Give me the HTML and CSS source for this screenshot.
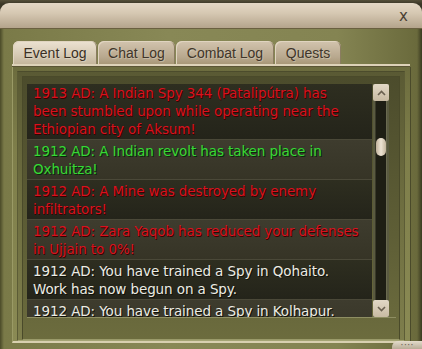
FILE: index.html
```html
<!DOCTYPE html>
<html lang="en">
<head>
    <meta charset="UTF-8">
    <meta name="viewport" content="width=device-width, initial-scale=1.0">
    <title>Event Log</title>
    <link rel="stylesheet" href="styles.css">
</head>
<body>
    <div class="window">
        <div class="titlebar">
            <span class="close">x</span>
        </div>
        <div class="main">
            <div class="tabs">
                <div class="tab active tab-event">Event Log</div>
                <div class="tab tab-chat">Chat Log</div>
                <div class="tab tab-combat">Combat Log</div>
                <div class="tab tab-quests">Quests</div>
            </div>
            <div class="tabline"></div>
            <div class="frame1">
                <div class="frame2">
                    <div class="frame3">
                        <div class="log">
                            <div class="rows">
                                <div class="row dark red">1913 AD: A Indian Spy 344 (Patalipútra) has<br>been stumbled upon while operating near the<br>Ethiopian city of Aksum!</div>
                                <div class="row light green">1912 AD: A Indian revolt has taken place in<br>Oxhuitza!</div>
                                <div class="row dark red">1912 AD: A Mine was destroyed by enemy<br>infiltrators!</div>
                                <div class="row light red">1912 AD: Zara Yaqob has reduced your defenses<br>in Ujjain to 0%!</div>
                                <div class="row dark white">1912 AD: You have trained a Spy in Qohaito.<br>Work has now begun on a Spy.</div>
                                <div class="row light white">1912 AD: You have trained a Spy in Kolhapur.<br>Work has now begun on a Spy.</div>
                            </div>
                            <div class="scrollbar">
                                <div class="sb-btn">
                                    <svg width="9" height="6" viewBox="0 0 9 6"><path d="M1 5 L4.5 1.5 L8 5" fill="none" stroke="#6a6050" stroke-width="1.6"/></svg>
                                </div>
                                <div class="sb-track">
                                    <div class="sb-thumb"></div>
                                </div>
                                <div class="sb-btn">
                                    <svg width="9" height="6" viewBox="0 0 9 6"><path d="M1 1 L4.5 4.5 L8 1" fill="none" stroke="#6a6050" stroke-width="1.6"/></svg>
                                </div>
                            </div>
                        </div>
                    </div>
                </div>
            </div>
        </div>
        <div class="grip">&middot;&middot;&middot;&middot;</div>
    </div>
</body>
</html>
```

FILE: styles.css
```css
body {
    margin: 0;
    background: #2e2c20;
    font-family: "Liberation Sans", Arial, sans-serif;
}
.window {
    position: relative;
    width: 422px;
    height: 349px;
    overflow: hidden;
    background: linear-gradient(#55503a, #3a3626 4px);
}
.titlebar {
    margin-top: 3px;
    height: 25px;
    border-radius: 9px 9px 0 0;
    background: linear-gradient(#e4d8c6, #d6c8b2 40%, #b4a48c);
    border-bottom: 1px solid #6a6040;
    display: flex;
    justify-content: flex-end;
    align-items: center;
}
.close {
    font-family: "DejaVu Sans", sans-serif;
    font-size: 15px;
    color: #4a4034;
    margin-right: 14px;
    margin-top: 1px;
}
.main {
    height: 320px;
    background: linear-gradient(90deg, #4a4a28 0, #7a7a48 4px, #888856 40%, #848452 80%, #6a6a3c 417px, #3a3a20 422px);
    padding-top: 12px;
}
.tabs {
    display: flex;
    gap: 1px;
    padding-left: 13px;
    height: 23px;
}
.tab {
    height: 23px;
    border-radius: 6px 6px 0 0;
    background: linear-gradient(#d2c4ae, #b8a88e 70%, #a89878);
    color: #40362a;
    font-size: 14px;
    line-height: 25px;
    text-align: center;
    box-shadow: inset 1px 1px 0 #e0d4c0, inset -1px 0 0 #8a7c60;
    text-shadow: 1px 1px 0 rgba(255, 255, 255, 0.25);
}
.tab.active {
    background: linear-gradient(#ece2d2, #d6cab4 60%, #c4b69c);
    color: #3a3024;
}
.tab-event { width: 84px; }
.tab-chat { width: 77px; }
.tab-combat { width: 98px; }
.tab-quests { width: 66px; }
.tabline {
    margin: 0 12px;
    height: 2px;
    background: #ddd2b8;
    border-bottom: 1px solid #5a5434;
}
.frame1 {
    margin: 0 11px 0 12px;
    height: 270px;
    padding: 4px 5px 0 4px;
    border-left: 1px solid #9a9a66;
    border-right: 1px solid #4a4a2a;
    border-bottom: 2px solid #d8d0b0;
    background: linear-gradient(#6c6c3e, #7e7e4a 30%, #8a8a54);
}
.frame2 {
    height: 264px;
    padding: 4px 4px 0 4px;
    border: 1px solid #5c5c36;
    border-top-color: #4c4c2c;
    border-bottom-color: #a4a474;
    background: linear-gradient(#5a5a34, #6e6e40 50%, #7e7e4c);
}
.frame3 {
    height: 255px;
    padding: 7px 3px 0 4px;
    border: 1px solid #4a4a2a;
    border-bottom-color: #9a9a6a;
    background: linear-gradient(#4c4c2c, #5e5e36 60%, #6c6c3e);
}
.log {
    display: flex;
    height: 233px;
    overflow: hidden;
    border-bottom: 1px solid #8e8e62;
}
.rows {
    width: 345px;
    overflow: hidden;
}
.row {
    padding: 2px 0 1px 6px;
    font-family: "DejaVu Sans", Verdana, sans-serif;
    font-size: 13.5px;
    line-height: 18px;
    letter-spacing: -0.1px;
    white-space: nowrap;
    border-bottom: 1px solid #4a4838;
}
.row:first-child {
    padding-top: 0;
}
.row.dark {
    background: linear-gradient(#2e2e20, #24241a);
}
.row.light {
    background: linear-gradient(#3e3c2e, #363426);
}
.red {
    color: #d8121e;
    text-shadow: 1px 1px 0 #3a0000;
}
.green {
    color: #36d836;
    text-shadow: 1px 1px 0 #0a2a08;
}
.white {
    color: #ecece4;
    text-shadow: 1px 1px 0 #101008;
}
.scrollbar {
    width: 16px;
    margin-left: 1px;
    display: flex;
    flex-direction: column;
    background: #5a5a40;
}
.sb-btn {
    height: 17px;
    border-radius: 2px;
    background: linear-gradient(#e2d8c6, #c8baa2);
    display: flex;
    align-items: center;
    justify-content: center;
}
.sb-track {
    flex: 1;
    margin: 0 2px;
    background: #1e1e14;
    border-left: 1px solid #3a3a2a;
    border-right: 1px solid #6a6a50;
    padding-top: 37px;
}
.sb-thumb {
    height: 18px;
    border-radius: 5px;
    background: linear-gradient(90deg, #bfb09a, #eee4d4 50%, #c2b49c);
}
.grip {
    position: absolute;
    right: 0;
    bottom: 0;
    width: 30px;
    height: 8px;
    border-radius: 6px 0 0 0;
    background: linear-gradient(#e4dccc, #b8ac96);
    color: #6a6050;
    font-size: 10px;
    line-height: 8px;
    text-align: center;
}
```
